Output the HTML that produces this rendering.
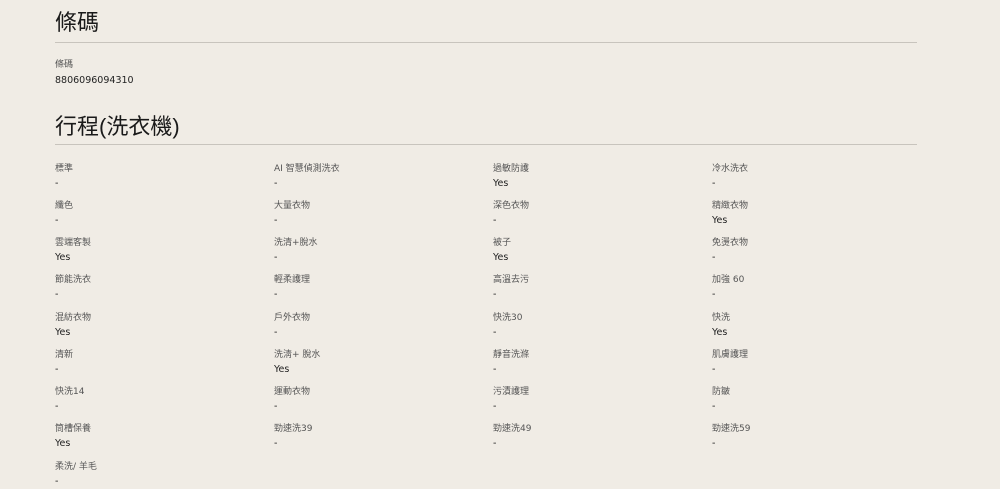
<!DOCTYPE html>
<html><head><meta charset="utf-8"><style>
body{margin:0;background:#f0ece5;font-family:"DejaVu Sans","Noto Sans CJK TC",sans-serif;color:#222;width:1000px;height:489px;overflow:hidden;position:relative}
.h{position:absolute;left:55px;font-size:22px;line-height:28px;color:#1a1a1a;font-family:"Liberation Sans","Noto Sans CJK TC",sans-serif}
.ln{position:absolute;left:55px;width:862px;height:1px;background:#c8c4bd}
.l{position:absolute;font-size:9px;color:#555;line-height:12px;white-space:nowrap}
.v{position:absolute;font-size:9.5px;color:#222;line-height:12px;white-space:nowrap}
</style></head><body>
<div class="h" style="top:9px">條碼</div>
<div class="ln" style="top:42px"></div>
<div class="l" style="left:55px;top:59px">條碼</div>
<div class="v" style="left:55px;top:75px">8806096094310</div>
<div class="h" style="top:113px">行程(洗衣機)</div>
<div class="ln" style="top:144px"></div>
<div id="g"></div>
<script>
var d=[["標準","-"],["AI 智慧偵測洗衣","-"],["過敏防護","Yes"],["冷水洗衣","-"],
["纖色","-"],["大量衣物","-"],["深色衣物","-"],["精緻衣物","Yes"],
["雲端客製","Yes"],["洗清+脫水","-"],["被子","Yes"],["免燙衣物","-"],
["節能洗衣","-"],["輕柔護理","-"],["高溫去污","-"],["加強 60","-"],
["混紡衣物","Yes"],["戶外衣物","-"],["快洗30","-"],["快洗","Yes"],
["清新","-"],["洗淸+ 脫水","Yes"],["靜音洗滌","-"],["肌膚護理","-"],
["快洗14","-"],["運動衣物","-"],["污漬護理","-"],["防皺","-"],
["筒槽保養","Yes"],["勁速洗39","-"],["勁速洗49","-"],["勁速洗59","-"],
["柔洗/ 羊毛","-"]];
var tops=[163,200,237,274,312,349,386,423,461],xs=[55,274,493,712],h="";
d.forEach(function(e,i){var r=Math.floor(i/4),c=i%4;
h+='<div class="l" style="left:'+xs[c]+'px;top:'+tops[r]+'px">'+e[0]+'</div>';
h+='<div class="v" style="left:'+xs[c]+'px;top:'+(tops[r]+15)+'px">'+e[1]+'</div>';});
document.getElementById("g").innerHTML=h;
</script>
</body></html>
